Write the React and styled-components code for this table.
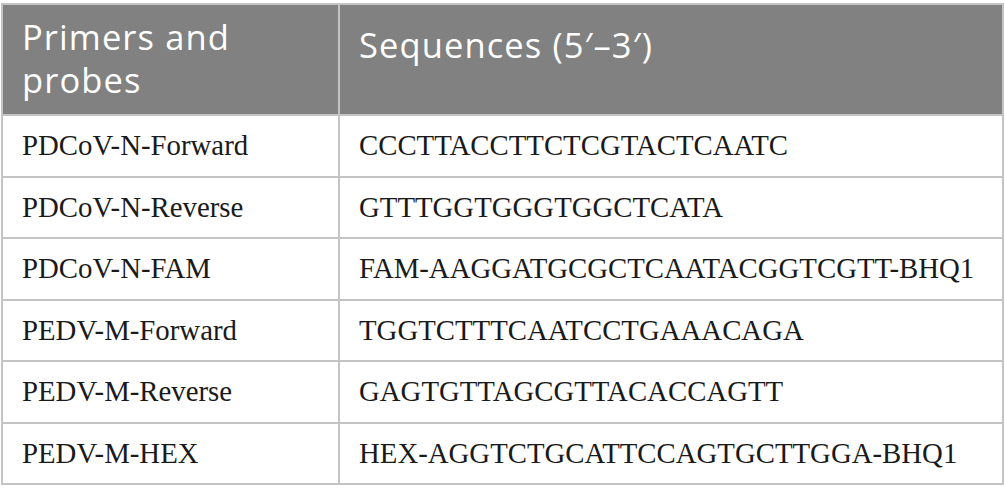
import React from "react";
import styled, { createGlobalStyle } from "styled-components";

const Global = createGlobalStyle`
  html, body { margin: 0; padding: 0; background: #ffffff; }
`;

const Page = styled.div`
  padding: 3px 1px 0 1px;
  width: 1003px;
`;

const Table = styled.table`
  width: 1003px;
  border-collapse: collapse;
  table-layout: fixed;
  border: 2px solid #c4c4c4;
`;

const HeadCell = styled.th`
  background: #808180;
  color: #ffffff;
  font-family: "Open Sans", "DejaVu Sans", sans-serif;
  font-weight: 400;
  font-size: 34.5px;
  letter-spacing: 1.1px;
  line-height: 43px;
  text-align: left;
  vertical-align: top;
  padding: ${(p) => p.$pad};
  height: 111px;
  box-sizing: border-box;
  border: 2px solid #c4c4c4;
  border-top: none;
  width: ${(p) => p.$w || "auto"};
`;

const Cell = styled.td`
  font-family: "Liberation Serif", "Times New Roman", serif;
  font-size: 28.8px;
  color: #1a1a1a;
  text-align: left;
  vertical-align: middle;
  padding: 0 0 0 19px;
  height: 61.5px;
  box-sizing: border-box;
  border: 2px solid #c4c4c4;
`;

const rows = [
  ["PDCoV-N-Forward", "CCCTTACCTTCTCGTACTCAATC"],
  ["PDCoV-N-Reverse", "GTTTGGTGGGTGGCTCATA"],
  ["PDCoV-N-FAM", "FAM-AAGGATGCGCTCAATACGGTCGTT-BHQ1"],
  ["PEDV-M-Forward", "TGGTCTTTCAATCCTGAAACAGA"],
  ["PEDV-M-Reverse", "GAGTGTTAGCGTTACACCAGTT"],
  ["PEDV-M-HEX", "HEX-AGGTCTGCATTCCAGTGCTTGGA-BHQ1"],
];

export default function App() {
  return (
    <>
      <Global />
      <Page>
        <Table>
          <thead>
            <tr>
              <HeadCell $w="337px" $pad="10px 10px 0 19px">Primers and probes</HeadCell>
              <HeadCell $pad="18px 10px 0 19px">Sequences (5′–3′)</HeadCell>
            </tr>
          </thead>
          <tbody>
            {rows.map(([a, b]) => (
              <tr key={a}>
                <Cell>{a}</Cell>
                <Cell>{b}</Cell>
              </tr>
            ))}
          </tbody>
        </Table>
      </Page>
    </>
  );
}
